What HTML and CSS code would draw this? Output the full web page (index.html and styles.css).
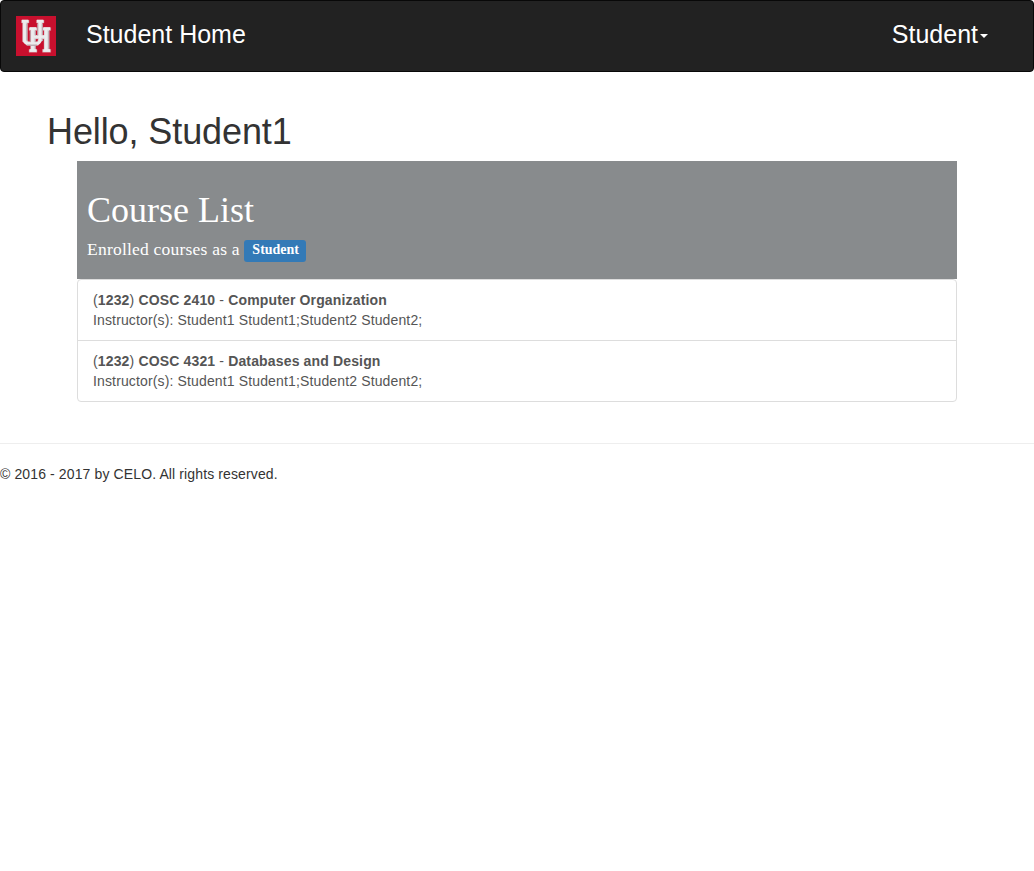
FILE: index.html
```html
<!DOCTYPE html>
<html lang="en">
<head>
<meta charset="utf-8">
<title>Student Home</title>
<link rel="stylesheet" href="styles.css">
</head>
<body>
<nav class="navbar">
  <svg class="logo" viewBox="0 0 40 40" aria-label="UH">
    <rect width="40" height="40" fill="#c8102e"/>
    <g class="logo-shape">
      <path d="M5.500 4H13v3h-1.500v17q0 1.500 1.500 1.500h7.500q1.500 0 1.500-1.500V7h-1.500V4H28v3h-1.500v17.500l-4.500 5H11l-4.500-4V7h-1z"/>
      <path d="M13 11.500h8v3h-1.500v5H28v-5h-1.500v-3h8.200v3h-1.500v18.800h1.500v3h-8.200v-3H28V23h-8.500v10.300H21v3h-8v-3h1.500V14.500H13z"/>
    </g>
    <path class="logo-light" d="M6 5h6M8.500 6v17.500q0 4 4 4h8q3.500 0 3.500-3.500V6M21 5h6M14 12.500h6M16.500 13v21M14 34.500h6M18 20.500h13M27.500 12.500h6.500M30 13v21M27.500 34.500h6.500"/>
    <path class="logo-seam" d="M10.800 7.500v17M14.200 15v10.500M19.300 15v4.500M21.600 19.500v-12M26.300 8v11M19.300 23v3M26.500 23v2M14.200 29.500h5M19.300 30v3M32.700 15v18M11 29h10"/>
  </svg>
  <span class="brand">Student Home</span>
  <div class="account">Student<b class="caret"></b></div>
</nav>
<main class="content">
  <h1 class="greeting">Hello, Student1</h1>
  <section class="courses">
    <header class="courses-head">
      <h2 class="courses-title">Course List</h2>
      <p class="courses-role">Enrolled courses as a <span class="label">Student</span></p>
    </header>
    <ul class="list">
      <li class="item"><span class="name">(<b>1232</b>) <b>COSC 2410</b> - <b>Computer Organization</b></span><span class="staff">Instructor(s): Student1 Student1;Student2 Student2;</span></li>
      <li class="item"><span class="name">(<b>1232</b>) <b>COSC 4321</b> - <b>Databases and Design</b></span><span class="staff">Instructor(s): Student1 Student1;Student2 Student2;</span></li>
    </ul>
  </section>
</main>
<footer class="footer"><span class="copyright">© 2016 - 2017 by CELO. All rights reserved.</span></footer>
</body>
</html>
```
FILE: styles.css
```css
* { box-sizing: border-box; }
body { margin: 0; background: #fff; color: #333; font: 14px/20px "Liberation Sans", Arial, sans-serif; }
.navbar { display: flex; height: 72px; padding: 15px; background: #222; border: 1px solid #080808; border-radius: 4px; color: #fff; font-size: 25px; }
.logo { width: 40px; height: 40px; margin-right: 30px; }
.logo-shape { fill: #dcdcdf; stroke: #dc8490; stroke-width: .4; }
.logo-light { fill: none; stroke: #ededee; stroke-width: 2.6; }
.logo-seam { fill: none; stroke: #b9aab0; stroke-width: .9; }
.brand { line-height: 37px; }
.account { display: flex; align-items: center; height: 36px; margin-left: auto; padding-right: 30px; line-height: 36px; }
.caret { margin: 4px 0 0 2px; border-top: 4px solid #fff; border-right: 4px solid transparent; border-left: 4px solid transparent; }
.content { padding: 40px 77px 0; }
.greeting { margin: 0 0 9px -30px; font-size: 36px; font-weight: 500; line-height: 40px; letter-spacing: -.1px; }
.courses-head { height: 118px; padding: 29px 10px 0; background: #888b8d; color: #fff; font-family: "Liberation Serif", "Times New Roman", serif; }
.courses-title { margin: 0; font-size: 36px; font-weight: 400; line-height: 40px; }
.courses-role { display: flex; gap: 4.500px; margin: 9px 0 0; font-size: 17.500px; line-height: 21px; letter-spacing: .22px; }
.label { height: 22px; margin-top: 1px; padding: 0 7px 0 8px; border-radius: 3px; background: #337ab7; font-size: 14px; font-weight: 700; line-height: 20px; letter-spacing: 0; }
.list { margin: 0; padding: 0; list-style: none; border: 1px solid #ddd; border-radius: 4px; color: #555; }
.item { padding: 10px 15px; }
.item + .item { border-top: 1px solid #ddd; }
.name, .staff { display: block; width: max-content; letter-spacing: .14px; }
.name { letter-spacing: .15px; }
.footer { margin-top: 41px; padding-top: 20px; border-top: 1px solid #eee; letter-spacing: .12px; }
```
